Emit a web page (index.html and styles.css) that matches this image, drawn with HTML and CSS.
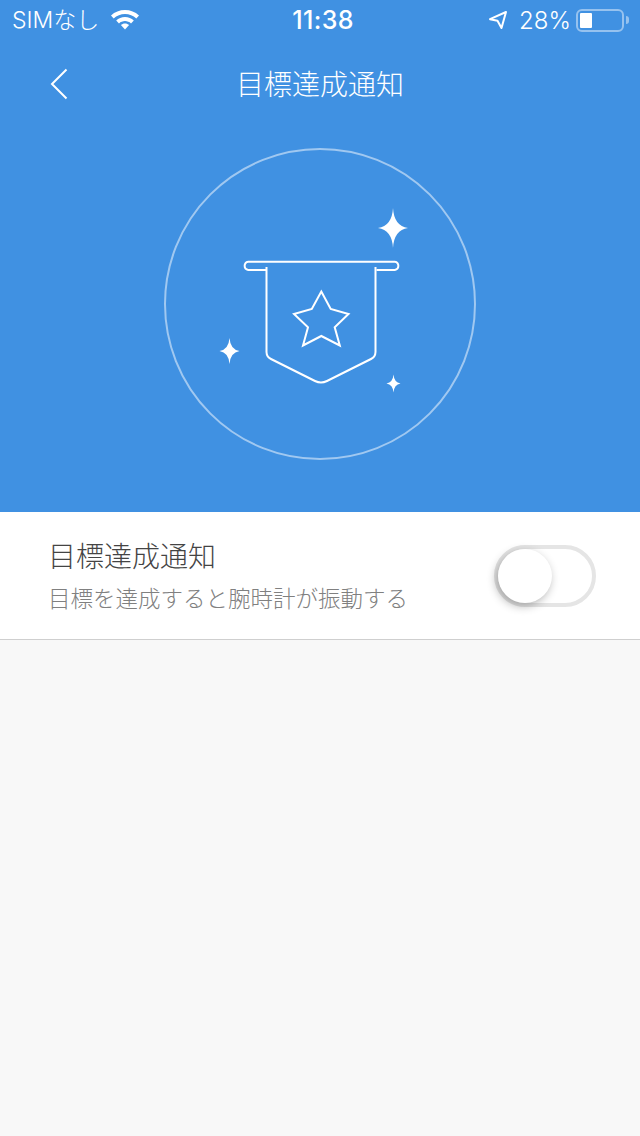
FILE: index.html
```html
<!DOCTYPE html>
<html lang="ja">
<head>
<meta charset="utf-8">
<title>目標達成通知</title>
<link rel="stylesheet" href="styles.css">
</head>
<body>
<div class="page">
  <header class="hero">
    <div class="status">
      <div class="status-left">
        <span class="carrier">SIMなし</span>
        <svg class="wifi" width="30" height="22" viewBox="0 0 30 22"><path fill="#fff" d="M15 2C9.600 2 4.800 4 1 7.400l2.700 3C6.800 7.700 10.700 6.100 15 6.100s8.200 1.600 11.300 4.300l2.700-3C25.200 4 20.400 2 15 2z"/><path fill="#fff" d="M15 9c-3.400 0-6.500 1.300-8.800 3.400l2.800 3c1.600-1.400 3.700-2.300 6-2.300s4.400.9 6 2.300l2.800-3C21.500 10.300 18.400 9 15 9z"/><path fill="#fff" d="M15 15.500c-1.600 0-3 .6-4.100 1.600L15 21.500l4.100-4.400c-1.100-1-2.500-1.600-4.100-1.600z"/></svg>
      </div>
      <span class="clock">11:38</span>
      <div class="status-right">
        <svg class="loc" width="20" height="20" viewBox="0 0 20 20"><path fill="none" stroke="#fff" stroke-width="2" stroke-linejoin="round" d="M18 2 2 9.200l7.500 1.500L13.500 18z"/></svg>
        <span class="pct">28%</span>
        <div class="battery"><div class="battery-fill"></div></div>
        <div class="battery-nub"></div>
      </div>
    </div>
    <nav class="nav">
      <svg class="back" width="18" height="32" viewBox="0 0 18 32"><path fill="none" stroke="#fff" stroke-width="2" d="M16.500 1.500 2 16l14.500 14.500"/></svg>
      <h1 class="nav-title">目標達成通知</h1>
    </nav>
    <svg class="emblem" width="312" height="312" viewBox="164 148 312 312">
      <circle class="ring" cx="320" cy="304" r="155"/>
      <g class="line">
        <path d="M266.500 270h-18.300a4.200 4.200 0 0 1 0-8.300h146.600a4.200 4.200 0 0 1 0 8.300H376.500"/>
        <path d="M266.500 267v85a8 8 0 0 0 4.500 7l44 22a14 14 0 0 0 12 0l44-22a8 8 0 0 0 4.500-7V267"/>
        <path d="M321.300 291.500 330.700 309 348.500 314 334.700 327.300 339.800 345.500 321.300 336 303 345.500 308 327.300 294 314 311.800 309z"/>
      </g>
      <g class="spark">
        <path d="M393 208q1 18 15 20q-14 2-15 20q-1-18-15-20q14-2 15-20z"/>
        <path d="M229.500 338q.8 11.500 10 13q-9.200 1.500-10 13q-.8-11.500-10-13q9.200-1.500 10-13z"/>
        <path d="M393.500 374.500q.6 7.800 7 9q-6.400 1.200-7 9q-.6-7.800-7-9q6.400-1.200 7-9z"/>
      </g>
    </svg>
  </header>
  <section class="row">
    <div class="row-text">
      <div class="row-title">目標達成通知</div>
      <div class="row-sub">目標を達成すると腕時計が振動する</div>
    </div>
    <div class="toggle"><div class="knob"></div></div>
  </section>
</div>
</body>
</html>
```
FILE: styles.css
```css
* { box-sizing: border-box; }
html, body { margin: 0; padding: 0; }
body {
  background: #f8f8f8;
  font-family: "Noto Sans CJK JP", "Noto Sans", sans-serif;
}
.page { width: 640px; height: 1136px; display: flex; flex-direction: column; }

.hero {
  height: 512px;
  background: #4091e2;
  color: #fff;
  display: flex;
  flex-direction: column;
  align-items: center;
}

.status {
  width: 100%;
  height: 40px;
  padding: 1px 11px 0 12px;
  display: grid;
  grid-template-columns: 1fr auto 1fr;
  align-items: center;
  font-family: Inter, "Noto Sans CJK JP", sans-serif;
}
.status-left { display: flex; align-items: center; gap: 11px; }
.carrier { font-size: 23px; font-weight: 300; line-height: 39px; }
.wifi { display: block; margin-top: -3px; }
.clock { font-size: 25px; font-weight: 500; letter-spacing: 0.4px; line-height: 39px; padding-left: 5px; }
.status-right { display: flex; align-items: center; justify-content: flex-end; }
.loc { display: block; margin-right: 11px; margin-top: -1px; }
.pct { font-size: 24px; font-weight: 300; line-height: 39px; margin-right: 5px; }
.battery {
  width: 48px;
  height: 23px;
  margin-top: -1px;
  border: 2px solid rgba(255, 255, 255, 0.45);
  border-radius: 6px;
  padding: 2px;
}
.battery-fill { width: 12px; height: 100%; background: #fff; border-radius: 1px; }
.battery-nub {
  width: 3px;
  height: 8px;
  margin-left: 2px;
  margin-top: -1px;
  background: rgba(255, 255, 255, 0.45);
  border-radius: 0 3px 3px 0;
}

.nav {
  width: 100%;
  height: 88px;
  padding-left: 50px;
  display: grid;
  grid-template-columns: 18px 1fr 68px;
  align-items: center;
}
.back { display: block; }
.nav-title {
  margin: 0 0 2px;
  font-size: 28px;
  font-weight: 300;
  line-height: 40px;
  text-align: center;
}

.emblem { display: block; margin-top: 20px; }
.ring { fill: none; stroke: rgba(255, 255, 255, 0.5); stroke-width: 2; }
.line { fill: none; stroke: #fff; stroke-width: 2; }
.spark { fill: #fff; }

.row {
  height: 128px;
  background: #fff;
  border-bottom: 1px solid #cfcfcf;
  padding: 0 44px 0 48px;
  display: flex;
  align-items: center;
  justify-content: space-between;
}
.row-text { padding-bottom: 4px; }
.row-title { font-size: 28px; font-weight: 300; line-height: 40px; color: #444; }
.row-sub { font-size: 22.500px; font-weight: 300; line-height: 32px; color: #808080; margin-top: 6px; }

.toggle {
  width: 102px;
  height: 62px;
  border: 4px solid #e5e5e5;
  border-radius: 31px;
  background: #fff;
  display: flex;
  align-items: center;
}
.knob {
  width: 54px;
  height: 54px;
  border-radius: 50%;
  background: #fff;
  box-shadow: -2px 3px 10px rgba(0, 0, 0, 0.3);
}
```
